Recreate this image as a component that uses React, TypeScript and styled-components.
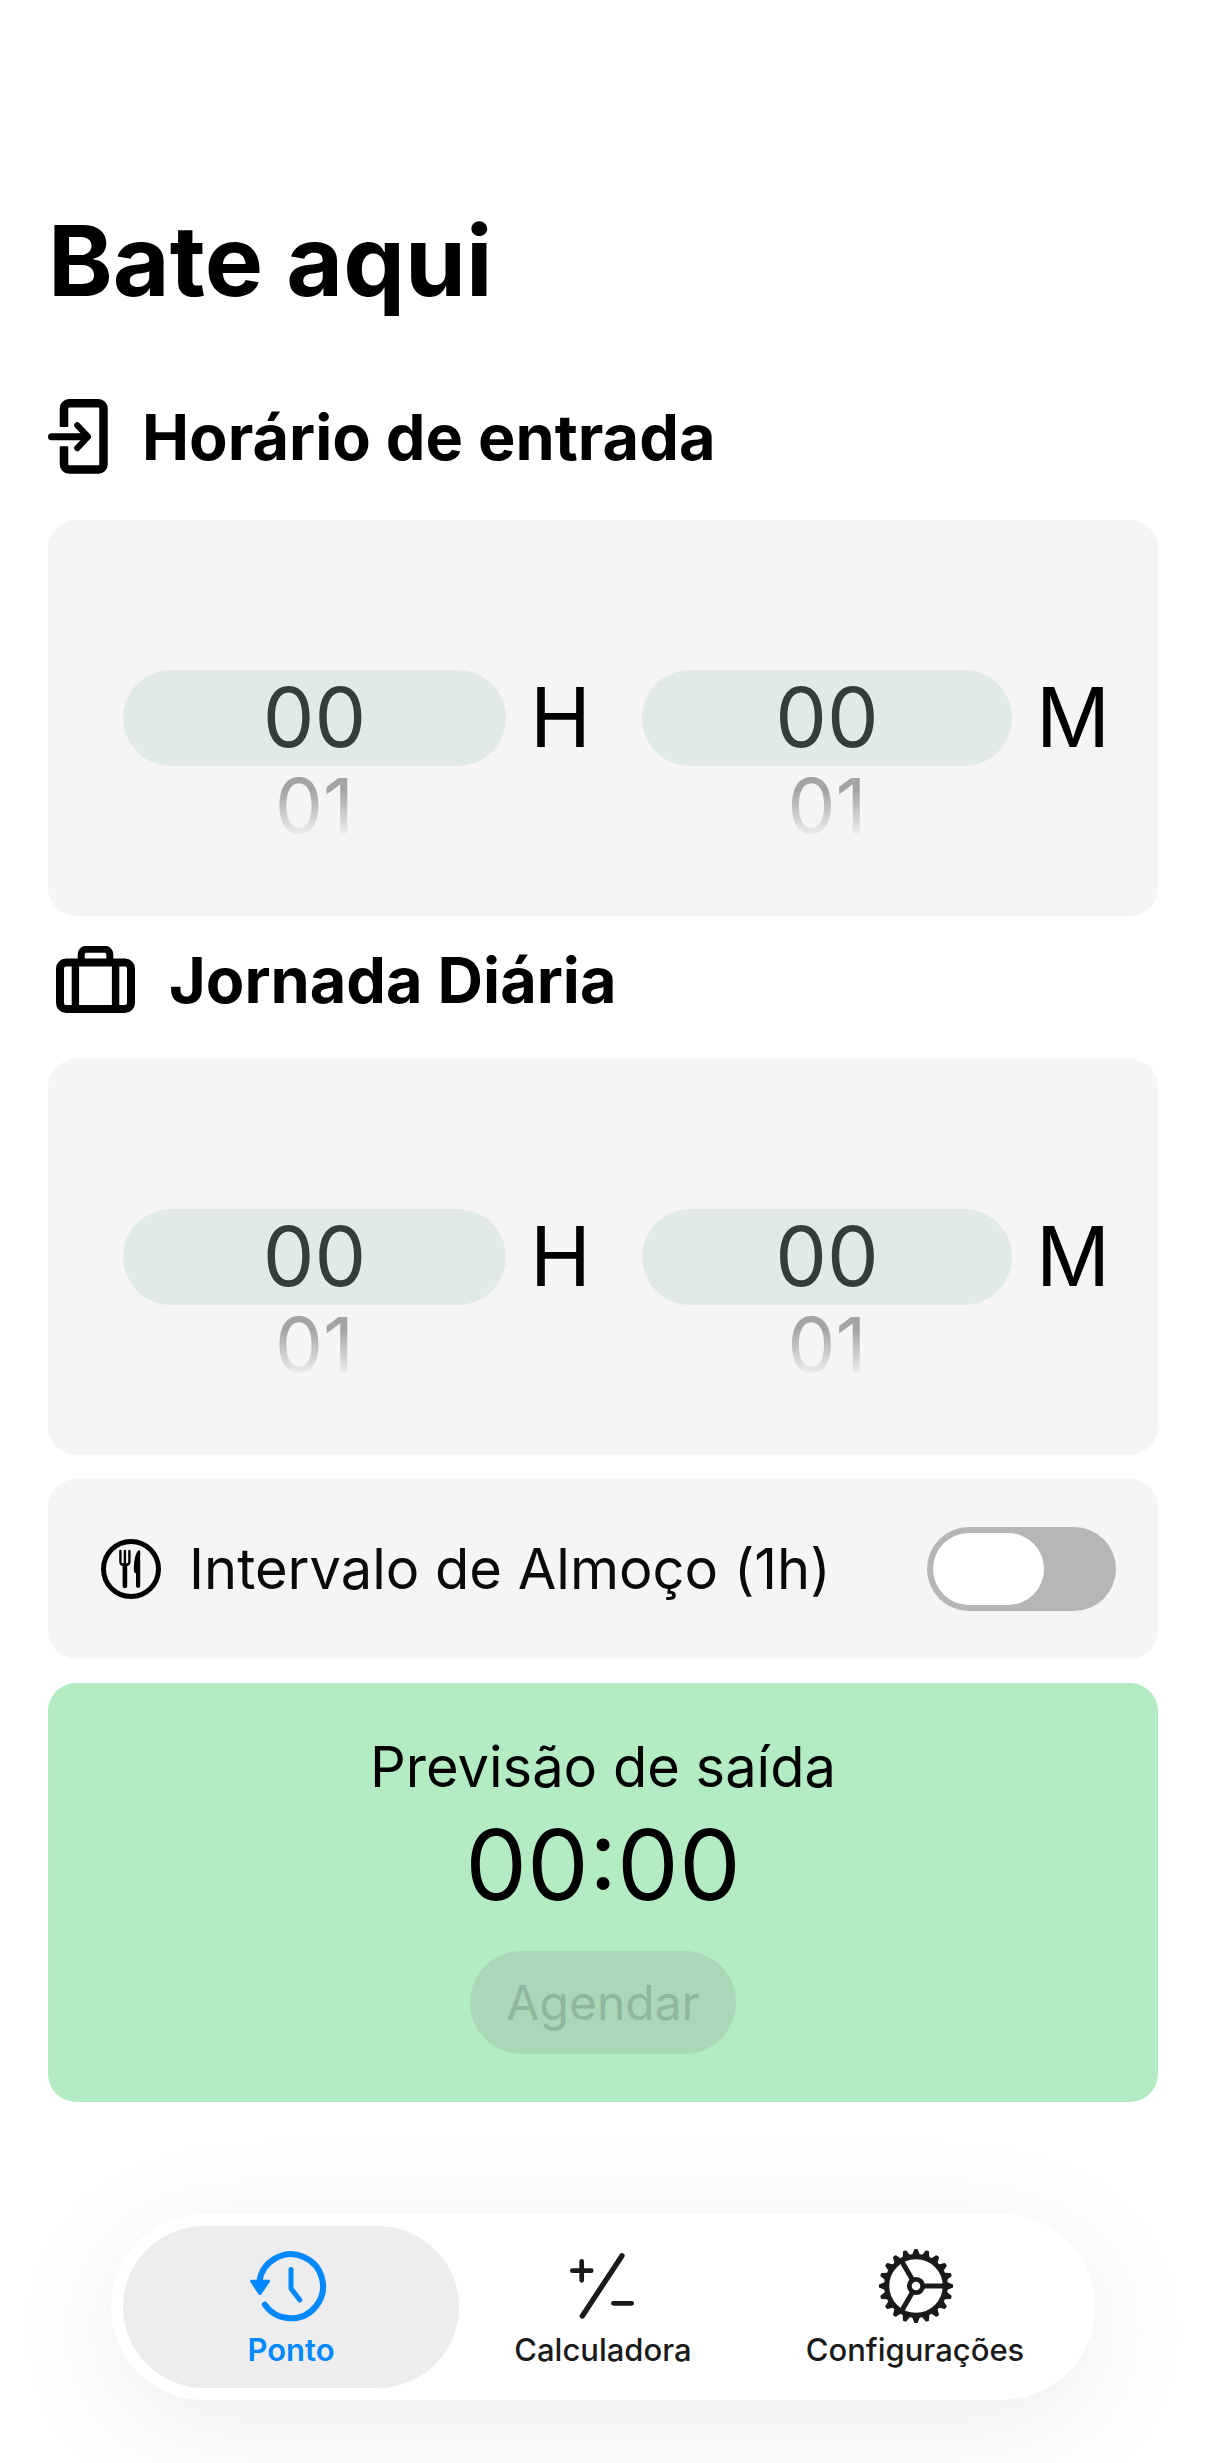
import { useId, useState, type ReactNode } from "react";
import styled, { createGlobalStyle } from "styled-components";

const color = {
  ink: "#000000",
  card: "#f5f5f5",
  pill: "#e1eae8",
  pillText: "#353d3b",
  faded: "#a4a4a4",
  green: "#b3ebc3",
  track: "#b5b7b5",
  accent: "#0088ff",
  tab: "#1a1a1a",
  tabActive: "#ededed",
};

const GlobalStyle = createGlobalStyle`
  *, *::before, *::after { box-sizing: border-box; }
  body {
    margin: 0;
    background: #ffffff;
    color: ${color.ink};
    font-family: Inter, "Liberation Sans", sans-serif;
  }
  button, input { font: inherit; }
`;

const Screen = styled.div`
  display: flex;
  flex-direction: column;
  min-height: 100vh;
  overflow: hidden;
`;

const Content = styled.main`
  display: flex;
  flex-direction: column;
  gap: 24px;
  padding: 201px 48px 112px;
`;

const Title = styled.h1`
  margin: 0 0 54px;
  font-size: 98px;
  font-weight: 700;
  line-height: 120px;
`;

const Section = styled.section`
  display: flex;
  flex-direction: column;
  gap: 46px;

  & + & {
    padding-top: 6px;
  }
`;

const SectionTitle = styled.h2`
  display: flex;
  align-items: center;
  gap: 34px;
  margin: 0;
  font-size: 63px;
  font-weight: 700;
  line-height: 64px;
`;

const Icon = styled.svg`
  display: block;
  flex: none;
  fill: none;
  stroke: currentColor;
  stroke-linecap: round;
  stroke-linejoin: round;
`;

const Card = styled.div`
  border-radius: 28px;
  background: ${color.card};
`;

const PickerCard = styled(Card)`
  display: grid;
  grid-template-columns: 1fr 1fr;
  gap: 51px;
  padding: 72px 48px 72px 75px;
`;

const Field = styled.div`
  display: flex;
  align-items: center;
  gap: 24px;
`;

const Unit = styled.span`
  font-size: 82px;
  line-height: 96px;
`;

const Wheel = styled.div`
  flex: 1;
  display: grid;
  grid-template-rows: 78px 96px 78px;
`;

const Current = styled.output`
  grid-row: 2;
  border-radius: 48px;
  background: ${color.pill};
  color: ${color.pillText};
  font-size: 82px;
  line-height: 96px;
  text-align: center;
`;

const Step = styled.button<{ $up?: boolean }>`
  grid-row: ${(p) => (p.$up ? 1 : 3)};
  padding: 0;
  border: 0;
  background: none;
  color: ${color.faded};
  font-size: 76px;
  line-height: 78px;
  text-align: center;
  mask-image: linear-gradient(
    ${(p) => (p.$up ? "to top" : "to bottom")},
    #000 24px,
    rgba(0, 0, 0, 0.14) 66px
  );
`;

const SwitchCard = styled(Card)`
  display: flex;
  align-items: center;
  gap: 28px;
  padding: 48px 42px 48px 53px;
`;

const SwitchLabel = styled.label`
  flex: 1;
  color: #0a0a0a;
  font-size: 56px;
  line-height: 72px;
`;

const Switch = styled.input`
  appearance: none;
  display: flex;
  flex: none;
  width: 189px;
  height: 84px;
  margin: 0;
  padding: 6px;
  border-radius: 42px;
  background: ${color.track};

  &::before {
    content: "";
    width: 111px;
    border-radius: 36px;
    background: #ffffff;
  }

  &:checked {
    justify-content: flex-end;
    background: #34c759;
  }
`;

const ForecastCard = styled(Card)`
  display: flex;
  flex-direction: column;
  align-items: center;
  padding: 48px;
  background: ${color.green};
`;

const ForecastLabel = styled.p`
  margin: 0;
  font-size: 56px;
  line-height: 72px;
`;

const ForecastTime = styled.output`
  margin-bottom: 24px;
  font-size: 98px;
  line-height: 124px;
`;

const ScheduleButton = styled.button`
  height: 103px;
  padding: 0 36px;
  border: 0;
  border-radius: 52px;
  background: #aad7b8;
  color: #8eb79d;
  font-size: 48px;
  line-height: 64px;
`;

const TabBar = styled.nav`
  display: flex;
  margin: auto 111px 63px;
  padding: 12px;
  border-radius: 93px;
  background: #ffffff;
  box-shadow: 0 24px 120px rgba(0, 0, 0, 0.08);
`;

const Tab = styled.a<{ $active?: boolean }>`
  flex: 1;
  display: flex;
  flex-direction: column;
  align-items: center;
  gap: 8px;
  padding: 22px 0 20px;
  border-radius: 81px;
  background: ${(p) => (p.$active ? color.tabActive : "transparent")};
  color: ${(p) => (p.$active ? color.accent : color.tab)};
  font-size: 31px;
  font-weight: ${(p) => (p.$active ? 600 : 500)};
  line-height: 36px;
  text-decoration: none;

  & + & {
    margin-left: -24px;
  }
`;

function EnterIcon() {
  return (
    <Icon width="60" height="75" viewBox="0 0 60 75" aria-hidden="true">
      <path
        d="M16 28V9.3a5 5 0 0 1 5-5H50.5a5 5 0 0 1 5 5V65.5a5 5 0 0 1-5 5H21a5 5 0 0 1-5-5V47.3"
        strokeWidth="8.5"
        strokeLinecap="butt"
      />
      <path d="M3.5 37.7H38" strokeWidth="7" />
      <path d="M29.3 26.3 40 37.7 29.3 49.1" strokeWidth="6.2" />
    </Icon>
  );
}

function SuitcaseIcon() {
  return (
    <Icon width="87" height="67" viewBox="0 0 87 67" aria-hidden="true">
      <rect x="12" y="16.6" width="71" height="46.4" rx="6" strokeWidth="8" />
      <path d="M27.4 17V63M67.6 17V63" strokeWidth="7.4" strokeLinecap="butt" />
      <path d="M33.2 15V8.3a5 5 0 0 1 5-5H56.8a5 5 0 0 1 5 5V15" strokeWidth="7" strokeLinecap="butt" />
    </Icon>
  );
}

function MealIcon() {
  return (
    <Icon width="60" height="60" viewBox="0 0 60 60" aria-hidden="true">
      <circle cx="30" cy="30" r="27.5" strokeWidth="5" />
      <path d="M19.4 12V23q0 3 4.5 3t4.5-3V12M23.9 12V26" strokeWidth="2.4" />
      <path d="M23.9 26V47" strokeWidth="4.6" />
      <path
        d="M39.2 13V47a2.1 2.1 0 0 1-4.2 0V34.4l-1.2-.6q-1-.6-1-2C32.8 23 34 15 37.2 11.6Q39.2 10.4 39.2 13Z"
        fill="currentColor"
        stroke="none"
      />
    </Icon>
  );
}

function ClockIcon() {
  return (
    <Icon width="84" height="76" viewBox="0 0 84 76" aria-hidden="true">
      <path d="M10.3 34A32 32 0 1 1 15.8 56.6" strokeWidth="6" />
      <path d="M2.6 33.2H19.6L10.9 45.6Z" fill="currentColor" strokeWidth="3" />
      <path d="M42 21.5V40.5L50.8 52" strokeWidth="5" />
    </Icon>
  );
}

function PlusMinusIcon() {
  return (
    <Icon width="84" height="76" viewBox="0 0 84 76" aria-hidden="true">
      <path d="M20.7 13.4V32.3M11.3 22.7H30.2M52.4 55.3H70.7" strokeWidth="4.7" />
      <path d="M61 7.7 21.3 68" strokeWidth="5.3" />
    </Icon>
  );
}

function GearIcon() {
  const teeth = Array.from({ length: 20 }, (_, i) => i * 18);
  return (
    <Icon width="84" height="76" viewBox="0 0 84 76" aria-hidden="true">
      <g transform="translate(43 38)">
        <circle r="29.3" strokeWidth="5.2" />
        <circle r="6.7" strokeWidth="4.8" />
        {[0, 120, 240].map((a) => (
          <path key={a} d="M8 0H28" strokeWidth="5" strokeLinecap="butt" transform={`rotate(${a})`} />
        ))}
        {teeth.map((a) => (
          <path
            key={a}
            d="M30.5-3.2 36.2-1V1L30.5 3.2Z"
            fill="currentColor"
            strokeWidth="1.8"
            transform={`rotate(${a})`}
          />
        ))}
      </g>
    </Icon>
  );
}

const two = (n: number) => String(n).padStart(2, "0");

type WheelProps = {
  label: string;
  unit: string;
  max: number;
  value: number;
  onChange: (value: number) => void;
};

function WheelField({ label, unit, max, value, onChange }: WheelProps) {
  return (
    <Field role="group" aria-label={label}>
      <Wheel>
        {value > 0 && (
          <Step $up type="button" onClick={() => onChange(value - 1)}>
            {two(value - 1)}
          </Step>
        )}
        <Current>{two(value)}</Current>
        {value < max && (
          <Step type="button" onClick={() => onChange(value + 1)}>
            {two(value + 1)}
          </Step>
        )}
      </Wheel>
      <Unit>{unit}</Unit>
    </Field>
  );
}

type Time = { h: number; m: number };

type TimeSectionProps = {
  icon: ReactNode;
  title: string;
  time: Time;
  onChange: (time: Time) => void;
};

function TimeSection({ icon, title, time, onChange }: TimeSectionProps) {
  return (
    <Section>
      <SectionTitle>
        {icon}
        {title}
      </SectionTitle>
      <PickerCard>
        <WheelField label="Horas" unit="H" max={23} value={time.h} onChange={(h) => onChange({ ...time, h })} />
        <WheelField label="Minutos" unit="M" max={59} value={time.m} onChange={(m) => onChange({ ...time, m })} />
      </PickerCard>
    </Section>
  );
}

export default function App() {
  const [entry, setEntry] = useState<Time>({ h: 0, m: 0 });
  const [shift, setShift] = useState<Time>({ h: 0, m: 0 });
  const [lunch, setLunch] = useState(false);
  const lunchId = useId();

  const worked = shift.h * 60 + shift.m;
  const exit = (entry.h * 60 + entry.m + worked + (lunch ? 60 : 0)) % 1440;

  return (
    <Screen>
      <GlobalStyle />
      <Content>
        <Title>Bate aqui</Title>
        <TimeSection icon={<EnterIcon />} title="Horário de entrada" time={entry} onChange={setEntry} />
        <TimeSection icon={<SuitcaseIcon />} title="Jornada Diária" time={shift} onChange={setShift} />
        <SwitchCard>
          <MealIcon />
          <SwitchLabel htmlFor={lunchId}>Intervalo de Almoço (1h)</SwitchLabel>
          <Switch
            id={lunchId}
            type="checkbox"
            role="switch"
            checked={lunch}
            onChange={(e) => setLunch(e.target.checked)}
          />
        </SwitchCard>
        <ForecastCard>
          <ForecastLabel>Previsão de saída</ForecastLabel>
          <ForecastTime>
            {`${two(Math.floor(exit / 60))}:${two(exit % 60)}`}
          </ForecastTime>
          <ScheduleButton type="button" disabled={worked === 0}>
            Agendar
          </ScheduleButton>
        </ForecastCard>
      </Content>
      <TabBar>
        <Tab href="#ponto" $active aria-current="page">
          <ClockIcon />
          Ponto
        </Tab>
        <Tab href="#calculadora">
          <PlusMinusIcon />
          Calculadora
        </Tab>
        <Tab href="#configuracoes">
          <GearIcon />
          Configurações
        </Tab>
      </TabBar>
    </Screen>
  );
}
